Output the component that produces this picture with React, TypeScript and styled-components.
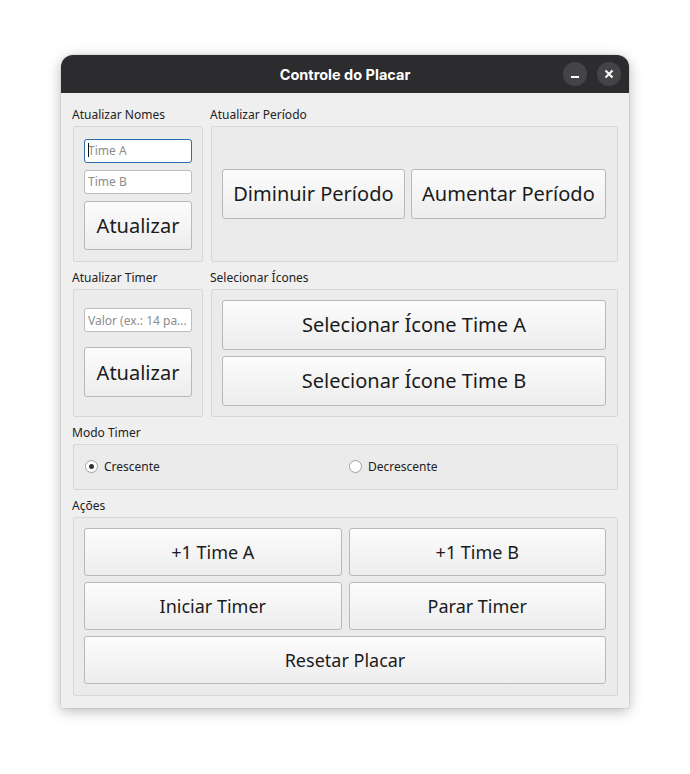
import styled, { createGlobalStyle } from "styled-components";

const GlobalStyle = createGlobalStyle`
  body {
    margin: 0;
    background: #ffffff;
    font-family: "Noto Sans", "DejaVu Sans", sans-serif;
  }
`;

const Page = styled.div`
  padding: 55px 0 0 61px;
  height: 774px;
  box-sizing: border-box;
`;

const Window = styled.div`
  width: 568px;
  background: #efefef;
  border-radius: 12px 12px 2px 2px;
  box-shadow: 0 3px 14px rgba(0, 0, 0, 0.28), 0 0 0 1px rgba(0, 0, 0, 0.06);
  overflow: hidden;
`;

const TitleBar = styled.div`
  height: 38px;
  background: #2c2c2e;
  display: flex;
  align-items: center;
  justify-content: center;
  position: relative;
`;

const Title = styled.span`
  color: #ffffff;
  font-family: Inter, "Noto Sans", sans-serif;
  font-weight: 700;
  font-size: 14.5px;
`;

const TitleControls = styled.div`
  position: absolute;
  right: 8px;
  top: 7px;
  display: flex;
  gap: 10px;
`;

const CircleButton = styled.div`
  width: 24px;
  height: 24px;
  border-radius: 50%;
  background: #444446;
  display: flex;
  align-items: center;
  justify-content: center;
`;

const Content = styled.div`
  padding: 14px 11px 12px 12px;
  display: flex;
  flex-direction: column;
  gap: 8px;
`;

const Row = styled.div`
  display: grid;
  grid-template-columns: 130px 407px;
  column-gap: 8px;
`;

const Section = styled.div`
  display: flex;
  flex-direction: column;
  gap: 3px;
`;

const Label = styled.div`
  font-size: 12px;
  line-height: 16px;
  color: #222222;
  margin-left: -1px;
`;

const Group = styled.div<{ $pad?: string; $height?: number }>`
  flex: 1 0 auto;
  background: #ebebeb;
  border: 1px solid #d7d7d7;
  border-radius: 2px;
  padding: ${(p) => p.$pad || "10px"};
  ${(p) => (p.$height ? `height: ${p.$height}px;` : "")}
  box-sizing: border-box;
`;

const Stack = styled.div<{ $gap: number; $center?: boolean }>`
  display: flex;
  flex-direction: column;
  gap: ${(p) => p.$gap}px;
  height: 100%;
  justify-content: ${(p) => (p.$center ? "center" : "flex-start")};
`;

const HStack = styled.div`
  display: flex;
  gap: 6px;
  align-items: center;
  height: 100%;
`;

const InputWrap = styled.div`
  position: relative;
`;

const Input = styled.input<{ $focused?: boolean }>`
  width: 100%;
  height: 24px;
  box-sizing: border-box;
  border: 1px solid ${(p) => (p.$focused ? "#2c6aa8" : "#bdbdbd")};
  border-radius: 3px;
  background: #ffffff;
  padding: 0 3px;
  font-family: "Noto Sans", sans-serif;
  font-size: 12px;
  color: #222;
  outline: none;
  &::placeholder {
    color: #8d8d8d;
  }
`;

const Caret = styled.span`
  position: absolute;
  left: 4px;
  top: 5px;
  width: 1px;
  height: 14px;
  background: #111;
`;

const Button = styled.button<{ $size?: number; $height?: number; $grow?: boolean }>`
  height: ${(p) => p.$height || 50}px;
  ${(p) => (p.$grow ? "flex: 1 1 auto;" : "")}
  padding: 0 10px;
  border: 1px solid #b9b9b9;
  border-radius: 3px;
  background: linear-gradient(#fcfcfc, #ededed);
  font-family: "Noto Sans", sans-serif;
  font-size: ${(p) => p.$size || 20}px;
  color: #1b1b1b;
  white-space: nowrap;
  cursor: pointer;
`;

const Grid2 = styled.div`
  display: grid;
  grid-template-columns: 1fr 1fr;
  gap: 6px 7px;
`;

const Wide = styled.div`
  grid-column: 1 / span 2;
  display: flex;
  flex-direction: column;
`;

const RadioRow = styled.div`
  display: grid;
  grid-template-columns: 1fr 1fr;
  column-gap: 6px;
  align-items: center;
  height: 100%;
`;

const RadioLabel = styled.label`
  display: flex;
  align-items: center;
  gap: 6px;
  font-size: 12px;
  color: #222;
`;

const RadioCircle = styled.span<{ $checked?: boolean }>`
  width: 13px;
  height: 13px;
  box-sizing: border-box;
  border-radius: 50%;
  border: 1px solid #a0a0a0;
  background: #ffffff;
  display: flex;
  align-items: center;
  justify-content: center;
  &::after {
    content: "";
    width: 5px;
    height: 5px;
    border-radius: 50%;
    background: ${(p) => (p.$checked ? "#333" : "transparent")};
  }
`;

export default function App() {
  return (
    <Page>
      <GlobalStyle />
      <Window>
        <TitleBar>
          <Title>Controle do Placar</Title>
          <TitleControls>
            <CircleButton>
              <svg width="10" height="10" viewBox="0 0 10 10">
                <rect x="1" y="7" width="8" height="2" fill="#fff" />
              </svg>
            </CircleButton>
            <CircleButton>
              <svg width="10" height="10" viewBox="0 0 10 10">
                <path d="M1.5 1.5 L8.5 8.5 M8.5 1.5 L1.5 8.5" stroke="#fff" strokeWidth="2" />
              </svg>
            </CircleButton>
          </TitleControls>
        </TitleBar>
        <Content>
          <Row>
            <Section>
              <Label>Atualizar Nomes</Label>
              <Group $pad="11px 10px 11px 10px">
                <Stack $gap={7}>
                  <InputWrap>
                    <Input $focused placeholder="Time A" />
                    <Caret />
                  </InputWrap>
                  <Input placeholder="Time B" />
                  <Button $height={49}>Atualizar</Button>
                </Stack>
              </Group>
            </Section>
            <Section>
              <Label>Atualizar Período</Label>
              <Group $pad="0 11px 0 10px">
                <HStack>
                  <Button $grow>Diminuir Período</Button>
                  <Button $grow>Aumentar Período</Button>
                </HStack>
              </Group>
            </Section>
          </Row>
          <Row>
            <Section>
              <Label>Atualizar Timer</Label>
              <Group $pad="0 10px">
                <Stack $gap={15} $center>
                  <Input placeholder="Valor (ex.: 14 pa..." />
                  <Button>Atualizar</Button>
                </Stack>
              </Group>
            </Section>
            <Section>
              <Label>Selecionar Ícones</Label>
              <Group $pad="10px 11px 10px 10px">
                <Stack $gap={6}>
                  <Button>Selecionar Ícone Time A</Button>
                  <Button>Selecionar Ícone Time B</Button>
                </Stack>
              </Group>
            </Section>
          </Row>
          <Section>
            <Label>Modo Timer</Label>
            <Group $pad="0 10px 0 11px" $height={46}>
              <RadioRow>
                <RadioLabel>
                  <RadioCircle $checked />
                  Crescente
                </RadioLabel>
                <RadioLabel>
                  <RadioCircle />
                  Decrescente
                </RadioLabel>
              </RadioRow>
            </Group>
          </Section>
          <Section>
            <Label>Ações</Label>
            <Group $pad="10px 11px 11px 10px">
              <Grid2>
                <Button $size={18} $height={48}>+1 Time A</Button>
                <Button $size={18} $height={48}>+1 Time B</Button>
                <Button $size={18} $height={48}>Iniciar Timer</Button>
                <Button $size={18} $height={48}>Parar Timer</Button>
                <Wide>
                  <Button $size={18} $height={48}>Resetar Placar</Button>
                </Wide>
              </Grid2>
            </Group>
          </Section>
        </Content>
      </Window>
    </Page>
  );
}
